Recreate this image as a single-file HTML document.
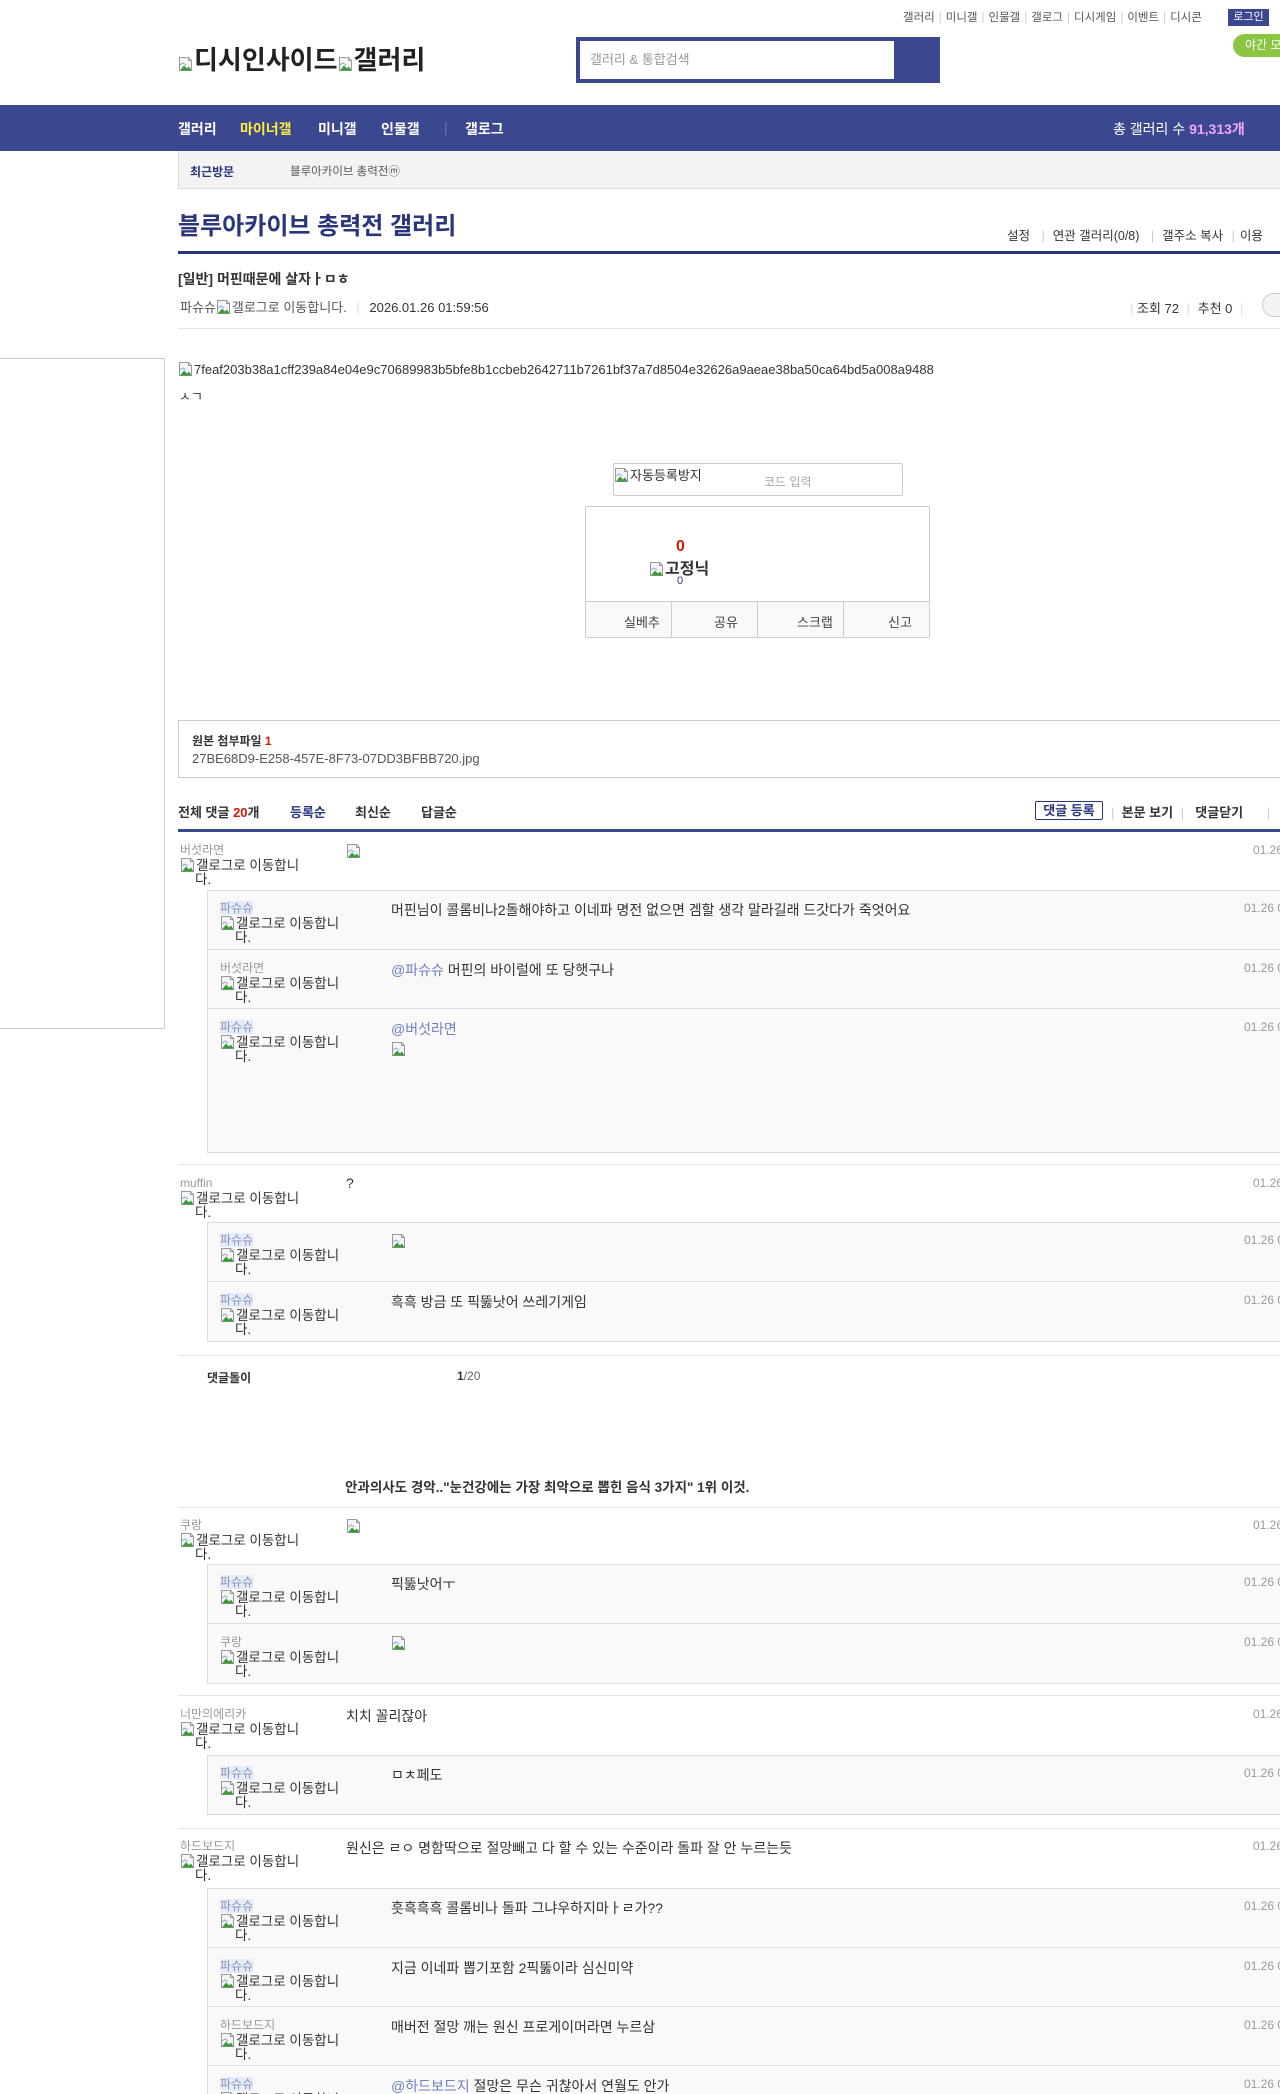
<!DOCTYPE html>
<html><head><meta charset="utf-8">
<style>
*{margin:0;padding:0;box-sizing:border-box}
html,body{width:1280px;height:2094px;overflow:hidden;background:#fff}
body{position:relative;font-family:"Liberation Sans","Noto Sans CJK KR",sans-serif;font-size:12px;color:#333}
.a{position:absolute;white-space:nowrap}
.bi{display:inline-block;width:16px;height:16px;vertical-align:-3px}
.topl{top:9px;left:903px;font-size:11.5px;color:#555}
.topl i{color:#ccc;font-style:normal;margin:0 4px}
.nav{top:105px;left:0;width:1280px;height:46px;background:#3b4890}
.nav span{position:absolute;top:14px;color:#fff;font-size:14px;font-weight:bold}
.recent{top:151px;left:178px;width:1110px;height:38px;background:#f3f3f3;border-bottom:1px solid #ddd;border-left:1px solid #ddd}
.gl{font-size:13.5px;color:#333;line-height:14px;white-space:nowrap;width:160px}
.nm{font-size:12px;color:#999;line-height:14px}
.fx{background:#e5ebf9;color:#8a94b5}
.dt{font-size:12px;color:#999}
.ct{font-size:14px;color:#333}
.at{color:#6f7fc2}
.rb{position:absolute;left:207px;width:1090px;background:#f9f9f9;border:1px solid #ddd}
.rr{position:absolute;left:0;width:100%;border-top:1px solid #ddd}
.sep{position:absolute;left:178px;width:1110px;height:1px;background:#e5e5e5}
</style></head><body>
<svg width="0" height="0" style="position:absolute"><defs><symbol id="b" viewBox="0 0 16 16"><path d="M1.5 1.5h9l3 3v10h-12z" fill="#f4f4f4" stroke="#999"/><path d="M10.5 1.5v3h3" fill="none" stroke="#999"/><path d="M2 14.5l4-5 3 3 2-2 2.5 4z" fill="#3a9a3a"/><path d="M2 9l3-2 3 2" fill="none" stroke="#7ab0e0"/></symbol></defs></svg>

<div class="a topl">갤러리<i>|</i>미니갤<i>|</i>인물갤<i>|</i>갤로그<i>|</i>디시게임<i>|</i>이벤트<i>|</i>디시콘</div>
<div class="a" style="top:9px;left:1228px;width:41px;height:17px;background:#3b4890;color:#fff;font-size:11px;text-align:center;line-height:17px">로그인</div>
<div class="a" style="top:34px;left:1233px;width:60px;height:23px;background:#8bc541;border-radius:12px;color:#fff;font-size:12px;line-height:23px;padding-left:12px">야간 모드</div>
<div class="a" style="top:40px;left:178px;font-size:26px;font-weight:bold;color:#222"><svg class="bi"><use href="#b"/></svg>디시인사이드<svg class="bi"><use href="#b"/></svg>갤러리</div>
<div class="a" style="top:37px;left:576px;width:364px;height:46px;background:#3b4890"><div style="position:absolute;left:4px;top:4px;width:314px;height:38px;background:#fff;color:#999;font-size:13px;line-height:38px;padding-left:10px">갤러리 &amp; 통합검색</div></div>

<div class="a nav"><span style="left:178px">갤러리</span><span style="left:240px;color:#ffed3c">마이너갤</span><span style="left:318px">미니갤</span><span style="left:381px">인물갤</span><span style="left:444px;top:14px;color:#6b76b0;font-weight:normal">|</span><span style="left:465px">갤로그</span><span style="left:1113px;font-weight:normal;font-size:14px">총 갤러리 수 <b style="color:#f0a7ff">91,313개</b></span></div>
<div class="a recent"><span class="a" style="left:11px;top:12px;font-weight:bold;color:#29367c;font-size:12px">최근방문</span><span class="a" style="left:111px;top:12px;color:#555;font-size:11.5px">블루아카이브 총력전ⓜ</span></div>

<div class="a" style="top:206px;left:178px;font-size:24px;font-weight:bold;color:#29367c">블루아카이브 총력전 갤러리</div>
<div class="a" style="top:225px;left:1007px;font-size:12.5px;color:#333">설정 <span style="color:#ccc;margin:0 8px">|</span>연관 갤러리(0/8) <span style="color:#ccc;margin:0 8px">|</span>갤주소 복사 <span style="color:#ccc;margin:0 5px">|</span>이용</div>
<div class="a" style="top:251px;left:178px;width:1110px;height:3px;background:#29367c"></div>

<div class="a" style="top:269px;left:178px;font-size:14px;font-weight:bold;color:#333">[일반] 머핀때문에 살자ㅏㅁㅎ</div>
<div class="a" style="top:297px;left:180px;font-size:13px;color:#555">파슈슈<svg class="bi"><use href="#b"/></svg>갤로그로 이동합니다. <span style="color:#ddd;margin:0 6px">|</span> <span style="color:#333">2026.01.26 01:59:56</span></div>
<div class="a" style="top:298px;left:1130px;font-size:13px;color:#333"><span style="color:#ddd">|</span> 조회 72 <span style="color:#ddd;margin:0 4px">|</span> 추천 0 <span style="color:#ddd;margin:0 4px">|</span></div>
<div class="a" style="top:293px;left:1262px;width:30px;height:24px;border:1px solid #ccc;border-radius:12px;background:#f3f3f3"></div>
<div class="a" style="top:328px;left:178px;width:1110px;height:1px;background:#e5e5e5"></div>

<div class="a" style="top:358px;left:-1px;width:166px;height:671px;border:1px solid #ccc"></div>
<div class="a" style="top:361px;left:178px;font-size:13px;color:#333"><svg class="bi"><use href="#b"/></svg>7feaf203b38a1cff239a84e04e9c70689983b5bfe8b1ccbeb2642711b7261bf37a7d8504e32626a9aeae38ba50ca64bd5a008a9488</div>
<div class="a" style="top:386px;left:179px;font-size:13px;color:#333">ㅅㄱ</div>

<div class="a" style="top:463px;left:613px;width:290px;height:33px;border:1px solid #ccc;border-radius:2px;background:#fff"><span class="a" style="left:0;top:1px;font-size:13px"><svg class="bi"><use href="#b"/></svg>자동등록방지</span><span class="a" style="left:150px;top:9px;font-size:12px;color:#aaa">코드 입력</span></div>
<div class="a" style="top:506px;left:585px;width:345px;height:132px;border:1px solid #ccc;border-radius:2px">
<span class="a" style="left:90px;top:31px;font-size:16px;font-weight:bold;color:#d31900">0</span>
<span class="a" style="left:63px;top:48px;font-size:16px;font-weight:bold;color:#333"><svg class="bi"><use href="#b"/></svg>고정닉</span>
<span class="a" style="left:91px;top:68px;font-size:11px;color:#29367c">0</span>
<div class="a" style="left:0;top:94px;width:343px;height:36px;border-top:1px solid #ccc;background:#f9f9f9;font-size:13px;color:#444">
<span class="a" style="left:38px;top:10px">실베추</span><span class="a" style="left:85px;top:0;width:1px;height:36px;background:#ccc"></span>
<span class="a" style="left:128px;top:10px">공유</span><span class="a" style="left:171px;top:0;width:1px;height:36px;background:#ccc"></span>
<span class="a" style="left:211px;top:10px">스크랩</span><span class="a" style="left:257px;top:0;width:1px;height:36px;background:#ccc"></span>
<span class="a" style="left:302px;top:10px">신고</span></div></div>

<div class="a" style="top:720px;left:178px;width:1110px;height:58px;border:1px solid #ccc"><span class="a" style="left:13px;top:11px;font-size:12px;font-weight:bold">원본 첨부파일 <span style="color:#d31900">1</span></span><span class="a" style="left:13px;top:30px;font-size:13px;color:#555">27BE68D9-E258-457E-8F73-07DD3BFBB720.jpg</span></div>

<div class="a" style="top:802px;left:178px;font-size:13px;font-weight:bold;color:#333">전체 댓글 <span style="color:#d31900">20</span>개</div>
<div class="a" style="top:802px;left:290px;font-size:13px;font-weight:bold;color:#29367c">등록순</div>
<div class="a" style="top:802px;left:355px;font-size:13px;font-weight:bold">최신순</div>
<div class="a" style="top:802px;left:421px;font-size:13px;font-weight:bold">답글순</div>
<div class="a" style="top:801px;left:1035px;width:68px;height:19px;border:1px solid #29367c;border-radius:2px;font-size:13px;font-weight:bold;color:#29367c;text-align:center;line-height:17px">댓글 등록</div>
<div class="a" style="top:802px;left:1111px;font-size:13px;font-weight:bold"><span style="color:#ccc;font-weight:normal">|</span> &nbsp;본문 보기 <span style="color:#ccc;font-weight:normal;margin:0 4px">|</span> &nbsp;댓글닫기 <span style="color:#ccc;font-weight:normal;margin-left:20px">|</span></div>
<div class="a" style="top:829px;left:178px;width:1110px;height:3px;background:#3b4890"></div>

<!-- C1 -->
<div class="a" style="top:843px;left:180px"><div class="nm">버섯라면</div><div class="gl"><svg class="bi"><use href="#b"/></svg>갤로그로 이동합니<br>&nbsp;&nbsp;&nbsp;&nbsp;다.</div></div>
<div class="a" style="top:843px;left:346px"><svg class="bi"><use href="#b"/></svg></div>
<div class="a dt" style="top:843px;left:1253px">01.26 02:00:00</div>
<div class="rb" style="top:890px;height:263px">
 <div class="rr" style="top:-1px;border:none;height:59px"><div class="a" style="top:11px;left:12px"><div class="nm"><span class="fx">파슈슈</span></div><div class="gl"><svg class="bi"><use href="#b"/></svg>갤로그로 이동합니<br>&nbsp;&nbsp;&nbsp;&nbsp;다.</div></div><div class="a ct" style="top:10px;left:183px">머핀님이 콜롬비나2돌해야하고 이네파 명전 없으면 겜할 생각 말라길래 드갓다가 죽엇어요</div><div class="a dt" style="top:11px;left:1036px">01.26 02:00:00</div></div>
 <div class="rr" style="top:58px;height:59px"><div class="a" style="top:11px;left:12px"><div class="nm">버섯라면</div><div class="gl"><svg class="bi"><use href="#b"/></svg>갤로그로 이동합니<br>&nbsp;&nbsp;&nbsp;&nbsp;다.</div></div><div class="a ct" style="top:10px;left:183px"><span class="at">@파슈슈</span> 머핀의 바이럴에 또 당햇구나</div><div class="a dt" style="top:11px;left:1036px">01.26 02:00:00</div></div>
 <div class="rr" style="top:117px;height:144px"><div class="a" style="top:11px;left:12px"><div class="nm"><span class="fx">파슈슈</span></div><div class="gl"><svg class="bi"><use href="#b"/></svg>갤로그로 이동합니<br>&nbsp;&nbsp;&nbsp;&nbsp;다.</div></div><div class="a ct" style="top:10px;left:183px"><span class="at">@버섯라면</span><br><svg class="bi" style="margin-top:2px"><use href="#b"/></svg></div><div class="a dt" style="top:11px;left:1036px">01.26 02:00:00</div></div>
</div>
<div class="sep" style="top:1164px"></div>

<!-- C2 -->
<div class="a" style="top:1176px;left:180px"><div class="nm">muffin</div><div class="gl"><svg class="bi"><use href="#b"/></svg>갤로그로 이동합니<br>&nbsp;&nbsp;&nbsp;&nbsp;다.</div></div>
<div class="a ct" style="top:1175px;left:346px">?</div>
<div class="a dt" style="top:1176px;left:1253px">01.26 02:00:00</div>
<div class="rb" style="top:1222px;height:120px">
 <div class="rr" style="top:-1px;border:none;height:59px"><div class="a" style="top:11px;left:12px"><div class="nm"><span class="fx">파슈슈</span></div><div class="gl"><svg class="bi"><use href="#b"/></svg>갤로그로 이동합니<br>&nbsp;&nbsp;&nbsp;&nbsp;다.</div></div><div class="a ct" style="top:11px;left:183px"><svg class="bi"><use href="#b"/></svg></div><div class="a dt" style="top:11px;left:1036px">01.26 02:00:00</div></div>
 <div class="rr" style="top:58px;height:60px"><div class="a" style="top:11px;left:12px"><div class="nm"><span class="fx">파슈슈</span></div><div class="gl"><svg class="bi"><use href="#b"/></svg>갤로그로 이동합니<br>&nbsp;&nbsp;&nbsp;&nbsp;다.</div></div><div class="a ct" style="top:10px;left:183px">흑흑 방금 또 픽뚫낫어 쓰레기게임</div><div class="a dt" style="top:11px;left:1036px">01.26 02:00:00</div></div>
</div>
<div class="sep" style="top:1355px"></div>

<div class="a" style="top:1369px;left:207px;font-size:12px;font-weight:bold">댓글돌이</div>
<div class="a" style="top:1369px;left:457px;font-size:12px;color:#666"><b style="color:#333">1</b>/20</div>
<div class="a" style="top:1476px;left:345px;font-size:13.5px;font-weight:bold">안과의사도 경악.."눈건강에는 가장 최악으로 뽑힌 음식 3가지" 1위 이것.</div>
<div class="sep" style="top:1507px"></div>

<!-- C3 -->
<div class="a" style="top:1518px;left:180px"><div class="nm">쿠랑</div><div class="gl"><svg class="bi"><use href="#b"/></svg>갤로그로 이동합니<br>&nbsp;&nbsp;&nbsp;&nbsp;다.</div></div>
<div class="a" style="top:1518px;left:346px"><svg class="bi"><use href="#b"/></svg></div>
<div class="a dt" style="top:1518px;left:1253px">01.26 02:00:00</div>
<div class="rb" style="top:1564px;height:120px">
 <div class="rr" style="top:-1px;border:none;height:59px"><div class="a" style="top:11px;left:12px"><div class="nm"><span class="fx">파슈슈</span></div><div class="gl"><svg class="bi"><use href="#b"/></svg>갤로그로 이동합니<br>&nbsp;&nbsp;&nbsp;&nbsp;다.</div></div><div class="a ct" style="top:10px;left:183px">픽뚫낫어ㅜ</div><div class="a dt" style="top:11px;left:1036px">01.26 02:00:00</div></div>
 <div class="rr" style="top:58px;height:60px"><div class="a" style="top:11px;left:12px"><div class="nm">쿠랑</div><div class="gl"><svg class="bi"><use href="#b"/></svg>갤로그로 이동합니<br>&nbsp;&nbsp;&nbsp;&nbsp;다.</div></div><div class="a ct" style="top:11px;left:183px"><svg class="bi"><use href="#b"/></svg></div><div class="a dt" style="top:11px;left:1036px">01.26 02:00:00</div></div>
</div>
<div class="sep" style="top:1695px"></div>

<!-- C4 -->
<div class="a" style="top:1707px;left:180px"><div class="nm">너만의에리카</div><div class="gl"><svg class="bi"><use href="#b"/></svg>갤로그로 이동합니<br>&nbsp;&nbsp;&nbsp;&nbsp;다.</div></div>
<div class="a ct" style="top:1706px;left:346px">치치 꼴리잖아</div>
<div class="a dt" style="top:1707px;left:1253px">01.26 02:00:00</div>
<div class="rb" style="top:1755px;height:60px">
 <div class="rr" style="top:-1px;border:none;height:59px"><div class="a" style="top:11px;left:12px"><div class="nm"><span class="fx">파슈슈</span></div><div class="gl"><svg class="bi"><use href="#b"/></svg>갤로그로 이동합니<br>&nbsp;&nbsp;&nbsp;&nbsp;다.</div></div><div class="a ct" style="top:10px;left:183px">ㅁㅊ페도</div><div class="a dt" style="top:11px;left:1036px">01.26 02:00:00</div></div>
</div>
<div class="sep" style="top:1828px"></div>

<!-- C5 -->
<div class="a" style="top:1839px;left:180px"><div class="nm">하드보드지</div><div class="gl"><svg class="bi"><use href="#b"/></svg>갤로그로 이동합니<br>&nbsp;&nbsp;&nbsp;&nbsp;다.</div></div>
<div class="a ct" style="top:1838px;left:346px">원신은 ㄹㅇ 명함딱으로 절망빼고 다 할 수 있는 수준이라 돌파 잘 안 누르는듯</div>
<div class="a dt" style="top:1839px;left:1253px">01.26 02:00:00</div>
<div class="rb" style="top:1888px;height:260px">
 <div class="rr" style="top:-1px;border:none;height:59px"><div class="a" style="top:11px;left:12px"><div class="nm"><span class="fx">파슈슈</span></div><div class="gl"><svg class="bi"><use href="#b"/></svg>갤로그로 이동합니<br>&nbsp;&nbsp;&nbsp;&nbsp;다.</div></div><div class="a ct" style="top:10px;left:183px">흣흑흑흑 콜롬비나 돌파 그냐우하지마ㅏㄹ가??</div><div class="a dt" style="top:11px;left:1036px">01.26 02:00:00</div></div>
 <div class="rr" style="top:58px;height:59px"><div class="a" style="top:11px;left:12px"><div class="nm"><span class="fx">파슈슈</span></div><div class="gl"><svg class="bi"><use href="#b"/></svg>갤로그로 이동합니<br>&nbsp;&nbsp;&nbsp;&nbsp;다.</div></div><div class="a ct" style="top:10px;left:183px">지금 이네파 뽑기포함 2픽뚫이라 심신미약</div><div class="a dt" style="top:11px;left:1036px">01.26 02:00:00</div></div>
 <div class="rr" style="top:117px;height:59px"><div class="a" style="top:11px;left:12px"><div class="nm">하드보드지</div><div class="gl"><svg class="bi"><use href="#b"/></svg>갤로그로 이동합니<br>&nbsp;&nbsp;&nbsp;&nbsp;다.</div></div><div class="a ct" style="top:10px;left:183px">매버전 절망 깨는 원신 프로게이머라면 누르삼</div><div class="a dt" style="top:11px;left:1036px">01.26 02:00:00</div></div>
 <div class="rr" style="top:176px;height:80px"><div class="a" style="top:11px;left:12px"><div class="nm"><span class="fx">파슈슈</span></div><div class="gl"><svg class="bi"><use href="#b"/></svg>갤로그로 이동합니<br>&nbsp;&nbsp;&nbsp;&nbsp;다.</div></div><div class="a ct" style="top:10px;left:183px"><span class="at">@하드보드지</span> 절망은 무슨 귀찮아서 연월도 안가</div><div class="a dt" style="top:11px;left:1036px">01.26 02:00:00</div></div>
</div>
</body></html>
